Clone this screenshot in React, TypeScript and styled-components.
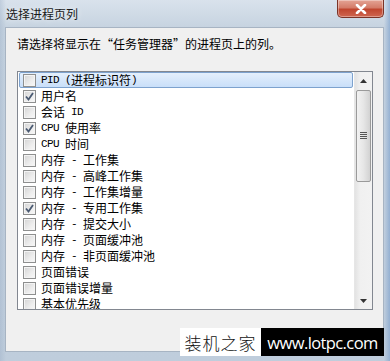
import React from 'react';
import styled, { createGlobalStyle } from 'styled-components';

const GlobalStyle = createGlobalStyle`
  html, body {
    margin: 0;
    padding: 0;
    background: #c9d5e2;
  }
  body {
    font-family: "Noto Sans CJK SC", "Liberation Sans", sans-serif;
  }
`;

const Frame = styled.div`
  position: relative;
  width: 390px;
  height: 361px;
  box-sizing: border-box;
  padding: 0 6px 9px 5px;
  display: flex;
  flex-direction: column;
  overflow: hidden;
  background:
    linear-gradient(90deg, rgba(150, 170, 195, 0.35) 0, rgba(255, 255, 255, 0) 6px),
    linear-gradient(270deg, rgba(110, 150, 200, 0.55) 0, rgba(255, 255, 255, 0) 6px),
    linear-gradient(180deg, #d9e2ec 0, #c6d3e0 28px, #bfcddc 100%);
`;

const TitleBar = styled.div`
  height: 27px;
  display: flex;
  justify-content: space-between;
  align-items: flex-start;
  flex-shrink: 0;
`;

const Title = styled.div`
  margin-top: 6px;
  margin-left: 1px;
  font-size: 12px;
  line-height: 16px;
  color: #1a1a1a;
  text-shadow: 0 0 6px rgba(255, 255, 255, 0.9);
`;

const CloseButton = styled.div`
  width: 47px;
  height: 18px;
  box-sizing: border-box;
  border: 1px solid #7b3327;
  border-top: none;
  border-radius: 0 0 5px 5px;
  background: linear-gradient(180deg, #e4a495 0, #d47c69 45%, #c0462f 55%, #cf6650 100%);
  box-shadow: inset 0 0 0 1px rgba(255, 255, 255, 0.35);
  display: flex;
  align-items: center;
  justify-content: center;
`;

const Client = styled.div`
  flex: 1;
  box-sizing: border-box;
  background: #f0f0f0;
  border: 1px solid #a7b4c3;
  padding: 8px 10px 0 11px;
  display: flex;
  flex-direction: column;
`;

const Prompt = styled.div`
  font-size: 12px;
  line-height: 16px;
  color: #000;
`;

const ListBox = styled.div`
  margin-top: 19px;
  height: 239px;
  box-sizing: border-box;
  border: 1px solid #828790;
  background: #fff;
  display: flex;
  overflow: hidden;
`;

const Items = styled.div`
  flex: 1;
  padding: 0 1px;
  overflow: hidden;
`;

const Row = styled.div<{ $selected?: boolean }>`
  height: 16px;
  box-sizing: border-box;
  display: flex;
  align-items: center;
  gap: 5px;
  padding-left: ${(p) => (p.$selected ? '3px' : '4px')};
  border-radius: 2px;
  border: ${(p) => (p.$selected ? '1px solid #7da2ce' : 'none')};
  background: ${(p) =>
    p.$selected ? 'linear-gradient(180deg, #e4effc 0, #c9dff9 100%)' : 'transparent'};
  font-size: 12px;
  line-height: 14px;
  color: #000;
  white-space: nowrap;
`;

const Box = styled.span`
  width: 13px;
  height: 13px;
  box-sizing: border-box;
  border: 1px solid #8e8f8f;
  background: linear-gradient(135deg, #d4d4d4 0, #ededed 60%, #f8f8f8 100%);
  box-shadow: inset 0 0 0 1px #f4f4f4;
  display: flex;
  align-items: center;
  justify-content: center;
  flex-shrink: 0;
`;

const Label = styled.span`
  display: flex;
  align-items: center;
`;

// half-width latin text, 6px per character like the system font
const Lat = styled.span`
  font-family: "Liberation Mono", "DejaVu Sans Mono", monospace;
  font-size: 11px;
  letter-spacing: -0.6px;
  white-space: pre;
`;

const Scrollbar = styled.div`
  width: 17px;
  flex-shrink: 0;
  background: linear-gradient(90deg, #e3e3e3 0, #f0f0f0 30%, #f2f2f2 100%);
  border-left: 1px solid #e6e6e6;
  display: flex;
  flex-direction: column;
  align-items: center;
`;

const Arrow = styled.div`
  width: 16px;
  height: 17px;
  display: flex;
  align-items: center;
  justify-content: center;
  flex-shrink: 0;
`;

const Thumb = styled.div`
  width: 15px;
  height: 92px;
  margin-top: 1px;
  box-sizing: border-box;
  border: 1px solid #9a9a9a;
  border-radius: 2px;
  background: linear-gradient(90deg, #f2f2f2 0, #e6e6e6 50%, #d2d2d2 100%);
  display: flex;
  align-items: center;
  justify-content: center;
`;

const Track = styled.div`
  flex: 1;
`;

const Watermark = styled.div`
  position: absolute;
  left: 180px;
  top: 328px;
  display: flex;
  align-items: flex-end;
`;

const MarkCn = styled.div`
  width: 81px;
  height: 28px;
  background: #fff;
  display: flex;
  align-items: center;
  justify-content: center;
  font-family: "Noto Sans CJK SC", sans-serif;
  font-weight: 300;
  font-size: 17px;
  letter-spacing: 1px;
  color: #111;
`;

const MarkUrl = styled.div`
  width: 123px;
  height: 28px;
  background: #000;
  color: #fff;
  display: flex;
  align-items: center;
  justify-content: center;
  font-family: "Open Sans", "Liberation Sans", sans-serif;
  font-size: 16.5px;
  letter-spacing: -0.6px;
`;

const Check = () => (
  <svg width="9" height="9" viewBox="0 0 9 9">
    <path d="M1 4.5 L3.5 7.5 L8 1" fill="none" stroke="#4a5a72" strokeWidth="1.8" />
  </svg>
);

type Item = { label: React.ReactNode; checked?: boolean; selected?: boolean };

const mem = (rest: string) => (
  <>
    内存<Lat> - </Lat>
    {rest}
  </>
);

const items: Item[] = [
  { label: <><Lat>PID (</Lat>进程标识符<Lat>)</Lat></>, selected: true },
  { label: '用户名', checked: true },
  { label: <>会话<Lat> ID</Lat></> },
  { label: <><Lat>CPU </Lat>使用率</>, checked: true },
  { label: <><Lat>CPU </Lat>时间</> },
  { label: mem('工作集') },
  { label: mem('高峰工作集') },
  { label: mem('工作集增量') },
  { label: mem('专用工作集'), checked: true },
  { label: mem('提交大小') },
  { label: mem('页面缓冲池') },
  { label: mem('非页面缓冲池') },
  { label: '页面错误' },
  { label: '页面错误增量' },
  { label: '基本优先级' },
];

const App: React.FC = () => (
  <>
    <GlobalStyle />
    <Frame>
      <TitleBar>
        <Title>选择进程页列</Title>
        <CloseButton>
          <svg width="12" height="10" viewBox="0 0 12 10">
            <path d="M2 1 L10 9 M10 1 L2 9" stroke="#fff" strokeWidth="2.6" strokeLinecap="round" />
          </svg>
        </CloseButton>
      </TitleBar>
      <Client>
        <Prompt>请选择将显示在“任务管理器”的进程页上的列。</Prompt>
        <ListBox>
          <Items>
            {items.map((it, i) => (
              <Row key={i} $selected={it.selected}>
                <Box>{it.checked && <Check />}</Box>
                <Label>{it.label}</Label>
              </Row>
            ))}
          </Items>
          <Scrollbar>
            <Arrow>
              <svg width="7" height="4" viewBox="0 0 7 4">
                <path d="M0 4 L3.5 0 L7 4 Z" fill="#333" />
              </svg>
            </Arrow>
            <Thumb>
              <svg width="7" height="8" viewBox="0 0 7 8">
                <path d="M0 0.5 H7 M0 2.5 H7 M0 4.5 H7 M0 6.5 H7" stroke="#555" strokeWidth="1" />
              </svg>
            </Thumb>
            <Track />
            <Arrow>
              <svg width="7" height="4" viewBox="0 0 7 4">
                <path d="M0 0 L7 0 L3.5 4 Z" fill="#333" />
              </svg>
            </Arrow>
          </Scrollbar>
        </ListBox>
      </Client>
      <Watermark>
        <MarkCn>装机之家</MarkCn>
        <MarkUrl>www.lotpc.com</MarkUrl>
      </Watermark>
    </Frame>
  </>
);

export default App;
